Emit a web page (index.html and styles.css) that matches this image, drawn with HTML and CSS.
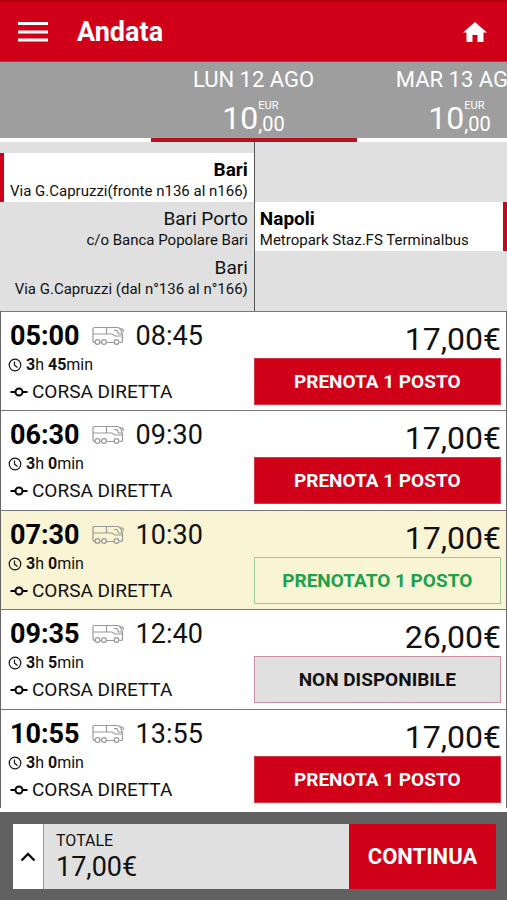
FILE: index.html
```html
<!DOCTYPE html>
<html lang="it">

<head>
    <meta charset="UTF-8">
    <meta name="viewport" content="width=device-width, initial-scale=1.0">
    <title>Andata</title>
    <link rel="stylesheet" href="styles.css">
</head>

<body>
    <svg class="sprite" width="0" height="0" aria-hidden="true">
        <symbol id="bus" viewBox="0 0 32 20">
            <g fill="none" stroke="currentColor" stroke-width="1.200">
                <path d="M3 16.500Q1 16.500 1 14.500V3.500Q1 1.500 3 1.500H25Q28 1.500 29 4L30.500 9V14.500Q30.500 16.500 28.500 16.500H27.500M8 16.500H9.500M14.500 16.500H22" />
                <path d="M1 8H20L23 10H30.500M14.500 1.500V8M22 4.500H25L26.500 8H30M27.500 3H30.500Q31.500 4 31.500 6" />
                <circle cx="5.500" cy="16" r="2.400" />
                <circle cx="12" cy="16" r="2.400" />
                <circle cx="24.500" cy="16" r="2.400" />
            </g>
        </symbol>
        <symbol id="clock" viewBox="0 0 14 14">
            <g fill="none" stroke="currentColor" stroke-width="1.200">
                <circle cx="7" cy="7" r="5.800" />
                <path d="M6.500 3.500V7.200L9.500 9.500" />
            </g>
        </symbol>
        <symbol id="direct" viewBox="0 0 18 10">
            <g fill="none" stroke="currentColor" stroke-width="2">
                <circle cx="9" cy="5" r="3.500" />
                <path d="M.500 5H5.500M12.500 5H17.500" />
            </g>
        </symbol>
    </svg>

    <header class="topbar">
        <button class="menu" aria-label="Menu">
            <svg width="30" height="20" viewBox="0 0 30 20"><path d="M0 1.500H30M0 10H30M0 18H30" stroke="currentColor" stroke-width="3" /></svg>
        </button>
        <h1>Andata</h1>
        <a class="home" href="#" aria-label="Home">
            <svg width="24" height="20" viewBox="0 0 24 20"><path d="M12 0L24 10.500H20.500V20H14.500V13H9.500V20H3.500V10.500H0Z" fill="currentColor" /></svg>
        </a>
    </header>

    <nav class="dates">
        <button class="date" aria-label="Giorno precedente"></button>
        <button class="date active">
            <span class="day">LUN 12 AGO</span>
            <span class="fare">10<span class="cents"><small>EUR</small><span>,00</span></span></span>
        </button>
        <button class="date">
            <span class="day">MAR 13 AGO</span>
            <span class="fare">10<span class="cents"><small>EUR</small><span>,00</span></span></span>
        </button>
    </nav>

    <section class="stops">
        <div class="from">
            <button class="stop selected"><b>Bari</b><small>Via G.Capruzzi(fronte n136 al n166)</small></button>
            <button class="stop"><span>Bari Porto</span><small>c/o Banca Popolare Bari</small></button>
            <button class="stop"><span>Bari</span><small>Via G.Capruzzi (dal n°136 al n°166)</small></button>
        </div>
        <div class="to">
            <button class="stop selected"><b>Napoli</b><small>Metropark Staz.FS Terminalbus</small></button>
        </div>
    </section>

    <main class="trips">
        <article class="trip">
            <div class="info">
                <div class="times"><b>05:00</b><svg class="bus"><use href="#bus" /></svg><span>08:45</span></div>
                <div class="duration"><svg class="clock"><use href="#clock" /></svg><span><b>3</b>h <b>45</b>min</span></div>
                <div class="kind"><svg class="direct"><use href="#direct" /></svg>CORSA DIRETTA</div>
            </div>
            <div class="buy">
                <div class="price">17,00€</div>
                <button class="book">PRENOTA 1 POSTO</button>
            </div>
        </article>
        <article class="trip">
            <div class="info">
                <div class="times"><b>06:30</b><svg class="bus"><use href="#bus" /></svg><span>09:30</span></div>
                <div class="duration"><svg class="clock"><use href="#clock" /></svg><span><b>3</b>h <b>0</b>min</span></div>
                <div class="kind"><svg class="direct"><use href="#direct" /></svg>CORSA DIRETTA</div>
            </div>
            <div class="buy">
                <div class="price">17,00€</div>
                <button class="book">PRENOTA 1 POSTO</button>
            </div>
        </article>
        <article class="trip booked">
            <div class="info">
                <div class="times"><b>07:30</b><svg class="bus"><use href="#bus" /></svg><span>10:30</span></div>
                <div class="duration"><svg class="clock"><use href="#clock" /></svg><span><b>3</b>h <b>0</b>min</span></div>
                <div class="kind"><svg class="direct"><use href="#direct" /></svg>CORSA DIRETTA</div>
            </div>
            <div class="buy">
                <div class="price">17,00€</div>
                <button class="book">PRENOTATO 1 POSTO</button>
            </div>
        </article>
        <article class="trip">
            <div class="info">
                <div class="times"><b>09:35</b><svg class="bus"><use href="#bus" /></svg><span>12:40</span></div>
                <div class="duration"><svg class="clock"><use href="#clock" /></svg><span><b>3</b>h <b>5</b>min</span></div>
                <div class="kind"><svg class="direct"><use href="#direct" /></svg>CORSA DIRETTA</div>
            </div>
            <div class="buy">
                <div class="price">26,00€</div>
                <button class="book" disabled>NON DISPONIBILE</button>
            </div>
        </article>
        <article class="trip">
            <div class="info">
                <div class="times"><b>10:55</b><svg class="bus"><use href="#bus" /></svg><span>13:55</span></div>
                <div class="duration"><svg class="clock"><use href="#clock" /></svg><span><b>3</b>h <b>0</b>min</span></div>
                <div class="kind"><svg class="direct"><use href="#direct" /></svg>CORSA DIRETTA</div>
            </div>
            <div class="buy">
                <div class="price">17,00€</div>
                <button class="book">PRENOTA 1 POSTO</button>
            </div>
        </article>
    </main>

    <footer class="summary">
        <button class="expand" aria-label="Dettagli">
            <svg width="16" height="10" viewBox="0 0 16 10"><path d="M1.500 8.500L8 2L14.500 8.500" fill="none" stroke="currentColor" stroke-width="2.400" /></svg>
        </button>
        <div class="total">
            <span class="label">TOTALE</span>
            <span class="amount">17,00€</span>
        </div>
        <button class="continue">CONTINUA</button>
    </footer>
</body>

</html>
```
FILE: styles.css
```css
* {
    box-sizing: border-box;
}

body {
    min-height: 100vh;
    display: flex;
    flex-direction: column;
    margin: 0;
    font-family: Roboto, sans-serif;
    color: #111;
    background-color: #fff;
}

button {
    margin: 0;
    padding: 0;
    border: none;
    background: none;
    font: inherit;
    color: inherit;
    cursor: pointer;
}

svg {
    display: block;
    flex: none;
}

.sprite {
    position: absolute;
}

/* header */

.topbar {
    display: flex;
    align-items: center;
    height: 62px;
    padding: 0 20px 0 18px;
    border-top: 2px solid #b0000f;
    border-bottom: 1px solid #b5303a;
    color: #fff;
    background-color: #d00018;
}

.topbar h1 {
    flex: 1;
    margin: 0 0 0 29px;
    font-size: 27px;
    line-height: 32px;
    font-weight: 700;
}

.home {
    color: #fff;
}

/* day picker */

.dates {
    display: flex;
    justify-content: center;
    overflow: hidden;
    color: #fff;
    background-color: #9e9e9e;
}

.date {
    flex: 0 0 206px;
    display: flex;
    flex-direction: column;
    align-items: center;
    height: 80px;
    padding-top: 5px;
    border-bottom: 4px solid #fff;
}

.date.active {
    border-bottom-color: #b5121f;
}

.day {
    font-size: 22px;
    line-height: 26px;
}

.fare {
    display: flex;
    align-items: center;
    height: 45px;
    padding-top: 4px;
    font-size: 32px;
    line-height: 38px;
}

.cents {
    display: flex;
    flex-direction: column;
    align-items: flex-start;
    font-size: 20px;
    line-height: 24px;
}

.cents small {
    font-size: 11px;
    line-height: 13px;
}

/* stops */

.stops {
    display: grid;
    grid-template-columns: 1fr 1fr;
    background-color: #e0e0e0;
}

.from,
.to {
    display: flex;
    flex-direction: column;
    padding: 11px 0;
}

.to {
    justify-content: center;
    border-left: 1px solid #555;
}

.stop {
    display: flex;
    flex-direction: column;
    height: 49px;
    padding: 5px 6px 4px;
    font-size: 19px;
    line-height: 24px;
    white-space: nowrap;
}

.stop small {
    font-size: 15px;
    line-height: 18px;
}

.from .stop {
    align-items: flex-end;
}

.to .stop {
    align-items: flex-start;
    padding-left: 5px;
}

.stop.selected {
    background-color: #fff;
}

.stop b {
    color: #000;
}

.from .selected {
    border-left: 4px solid #d00018;
}

.to .selected {
    border-right: 4px solid #c00a20;
}

/* trips */

.trips {
    flex: 1;
    display: grid;
    grid-auto-rows: 1fr;
    margin-bottom: 4px;
    border: 1px solid #666;
    border-top: none;
    border-bottom: none;
}

.trip {
    display: grid;
    grid-template-columns: 1fr 1fr;
    border-top: 1px solid #777;
}

.trip.booked {
    background-color: #f9f4d3;
}

.info {
    padding: 8px 0 0 7px;
}

.times {
    display: flex;
    align-items: center;
    padding-left: 2px;
    font-size: 27px;
    line-height: 32px;
}

.times b {
    color: #000;
}

.bus {
    width: 32px;
    height: 20px;
    margin: 0 12px;
    color: #999;
}

.duration {
    display: flex;
    align-items: center;
    gap: 4px;
    font-size: 16px;
    line-height: 26px;
}

.clock {
    width: 14px;
    height: 14px;
}

.kind {
    display: flex;
    align-items: center;
    gap: 4px;
    padding-left: 2px;
    font-size: 19px;
    line-height: 28px;
}

.direct {
    width: 18px;
    height: 10px;
    color: #000;
}

.buy {
    display: flex;
    flex-direction: column;
    padding: 8px 5px 0 0;
}

.price {
    font-size: 32px;
    line-height: 38px;
    text-align: right;
}

.book {
    height: 47px;
    border: 1px solid #d2384a;
    font-size: 19px;
    font-weight: 700;
    color: #fff;
    background-color: #d00018;
}

.booked .book {
    border-color: #9ccb9a;
    color: #1ea04c;
    background: none;
}

.book:disabled {
    border-color: #c98f9e;
    color: #111;
    background-color: #e0e0e0;
    cursor: default;
}

/* total */

.summary {
    display: flex;
    padding: 12px 11px 11px 13px;
    background-color: #616161;
}

.expand {
    display: flex;
    align-items: center;
    justify-content: center;
    width: 31px;
    border-right: 1px solid #999;
    background-color: #fff;
}

.total {
    flex: 1;
    display: flex;
    flex-direction: column;
    padding: 7px 12px 6px;
    background-color: #e0e0e0;
}

.total .label {
    font-size: 16px;
    line-height: 20px;
}

.total .amount {
    font-size: 27px;
    line-height: 32px;
}

.continue {
    width: 147px;
    font-size: 22px;
    font-weight: 700;
    color: #fff;
    background-color: #d00018;
}
```
